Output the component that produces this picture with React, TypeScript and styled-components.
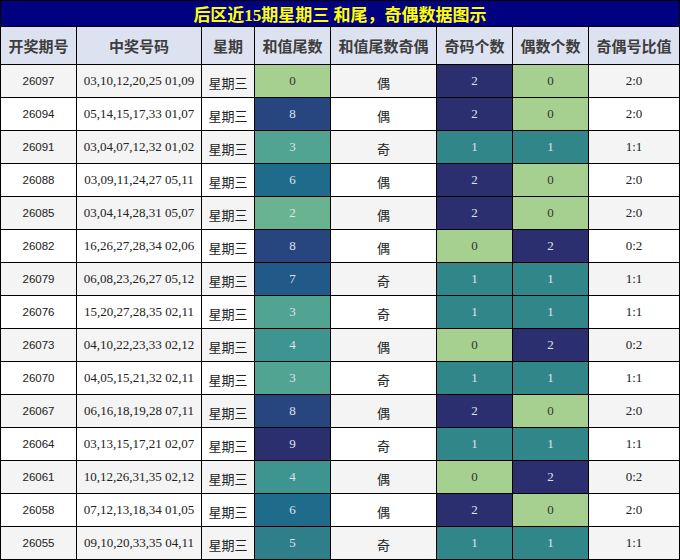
import React from "react";
import styled, { createGlobalStyle } from "styled-components";

const Global = createGlobalStyle`
  html, body { margin: 0; padding: 0; background: #ffffff; }
  body { font-family: "Liberation Serif", "Noto Sans CJK SC", serif; }
`;

const COLS = "76px 125px 53px 76px 106px 76px 76px 91px";

const Board = styled.div`
  width: 680px;
  box-sizing: border-box;
  border-left: 1px solid #000;
  border-top: 1px solid #000;
`;

const Title = styled.div`
  height: 26px;
  box-sizing: border-box;
  border-right: 1px solid #000;
  border-bottom: 1px solid #000;
  background: #000080;
  color: #ffff00;
  font-family: "Liberation Serif", "Noto Sans CJK SC", serif;
  font-weight: bold;
  font-size: 17px;
  display: flex;
  align-items: center;
  justify-content: center;
  white-space: pre;
`;

const Row = styled.div<{ $h: number; $bg: string }>`
  display: grid;
  grid-template-columns: ${COLS};
  height: ${(p) => p.$h}px;
  background: ${(p) => p.$bg};
`;

const HeadCell = styled.div`
  box-sizing: border-box;
  border-right: 1px solid #000;
  border-bottom: 1px solid #000;
  display: flex;
  align-items: center;
  justify-content: center;
  font-family: "Noto Sans CJK SC", sans-serif;
  font-weight: bold;
  font-size: 15px;
  color: #3d3d3d;
  white-space: nowrap;
`;

type Kind = "issue" | "num" | "cjk" | "ratio";

const Cell = styled.div<{ $kind: Kind; $bg?: string; $fg?: string }>`
  box-sizing: border-box;
  border-right: 1px solid #000;
  border-bottom: 1px solid #000;
  display: flex;
  align-items: center;
  justify-content: center;
  white-space: nowrap;
  background: ${(p) => p.$bg || "transparent"};
  color: ${(p) => p.$fg || "#222"};
  font-family: ${(p) =>
    p.$kind === "issue"
      ? '"Liberation Sans", sans-serif'
      : p.$kind === "cjk"
      ? '"Noto Sans CJK SC", sans-serif'
      : '"Liberation Serif", serif'};
  font-size: ${(p) => (p.$kind === "issue" ? "11.5px" : "13px")};
  padding-top: ${(p) => (p.$kind === "cjk" ? "2px" : "0")};
`;

const tailColors: Record<number, string> = {
  0: "#a6d08f",
  1: "#86c28f",
  2: "#6ab391",
  3: "#51a392",
  4: "#3e9490",
  5: "#2f7f8b",
  6: "#1f6b8b",
  7: "#215a88",
  8: "#27467f",
  9: "#2c2f6e",
};

const countColors: Record<number, string> = {
  0: "#a6d08f",
  1: "#31868a",
  2: "#2b2f6f",
};

const fgFor = (v: number) => (v === 0 ? "#333" : "#dde2ee");

const rows: [string, string, number, string, number, number][] = [
  ["26097", "03,10,12,20,25 01,09", 0, "偶", 2, 0],
  ["26094", "05,14,15,17,33 01,07", 8, "偶", 2, 0],
  ["26091", "03,04,07,12,32 01,02", 3, "奇", 1, 1],
  ["26088", "03,09,11,24,27 05,11", 6, "偶", 2, 0],
  ["26085", "03,04,14,28,31 05,07", 2, "偶", 2, 0],
  ["26082", "16,26,27,28,34 02,06", 8, "偶", 0, 2],
  ["26079", "06,08,23,26,27 05,12", 7, "奇", 1, 1],
  ["26076", "15,20,27,28,35 02,11", 3, "奇", 1, 1],
  ["26073", "04,10,22,23,33 02,12", 4, "偶", 0, 2],
  ["26070", "04,05,15,21,32 02,11", 3, "奇", 1, 1],
  ["26067", "06,16,18,19,28 07,11", 8, "偶", 2, 0],
  ["26064", "03,13,15,17,21 02,07", 9, "奇", 1, 1],
  ["26061", "10,12,26,31,35 02,12", 4, "偶", 0, 2],
  ["26058", "07,12,13,18,34 01,05", 6, "偶", 2, 0],
  ["26055", "09,10,20,33,35 04,11", 5, "奇", 1, 1],
];

const headers = ["开奖期号", "中奖号码", "星期", "和值尾数", "和值尾数奇偶", "奇码个数", "偶数个数", "奇偶号比值"];

export default function App() {
  return (
    <>
      <Global />
      <Board>
        <Title>后区近15期星期三 和尾，奇偶数据图示</Title>
        <Row $h={38} $bg="#dde2f1">
          {headers.map((h) => (
            <HeadCell key={h}>{h}</HeadCell>
          ))}
        </Row>
        {rows.map(([issue, nums, tail, parity, odd, even], i) => (
          <Row key={issue} $h={33} $bg={i % 2 === 0 ? "#f4f4f4" : "#ffffff"}>
            <Cell $kind="issue">{issue}</Cell>
            <Cell $kind="num">{nums}</Cell>
            <Cell $kind="cjk">星期三</Cell>
            <Cell $kind="num" $bg={tailColors[tail]} $fg={fgFor(tail)}>
              {tail}
            </Cell>
            <Cell $kind="cjk">{parity}</Cell>
            <Cell $kind="num" $bg={countColors[odd]} $fg={fgFor(odd)}>
              {odd}
            </Cell>
            <Cell $kind="num" $bg={countColors[even]} $fg={fgFor(even)}>
              {even}
            </Cell>
            <Cell $kind="num">{`${odd}:${even}`}</Cell>
          </Row>
        ))}
      </Board>
    </>
  );
}
